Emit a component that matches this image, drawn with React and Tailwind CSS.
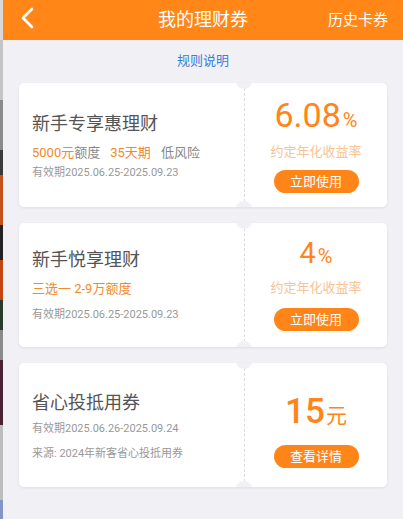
import React from 'react';

const cjk = { fontFamily: 'Roboto, "Noto Sans CJK SC", sans-serif' };

const Notches = () => (
  <>
    <span className="absolute left-[217px] top-[-10px] w-4 h-4 rounded-full bg-[#f1f1f5]" />
    <span className="absolute left-[217px] bottom-[-10px] w-4 h-4 rounded-full bg-[#f1f1f5]" />
  </>
);

const Card = ({ left, right, className = '' }) => (
  <div className={`relative flex h-[124px] bg-white rounded-[5px] shadow-[0_1px_3px_rgba(0,0,0,0.08)] overflow-hidden ${className}`}>
    <div className="w-[225px] pl-[13px] shrink-0">{left}</div>
    <div className="flex-1 border-l border-dashed border-[#dcdcdc] flex flex-col items-center">{right}</div>
    <Notches />
  </div>
);

const Button = ({ children, className = '' }) => (
  <div className={`w-[85px] h-[23px] rounded-full bg-[#ff8519] text-white text-[13px] leading-[23px] text-center ${className}`}>
    {children}
  </div>
);

const App = () => {
  return (
    <div className="flex w-[403px] min-h-[519px] bg-[#f1f1f5]" style={cjk}>
      {/* left edge of previous page */}
      <div className="w-[3px] shrink-0 flex flex-col">
        <div className="h-[40px] bg-[#d8d8d8]" />
        <div className="h-[60px] bg-[#c4c4c4]" />
        <div className="h-[50px] bg-[#8a8a8a]" />
        <div className="h-[25px] bg-[#3a3a3a]" />
        <div className="h-[50px] bg-[#c8501c]" />
        <div className="h-[35px] bg-[#222]" />
        <div className="h-[40px] bg-[#c24512]" />
        <div className="h-[30px] bg-[#2c3a2c]" />
        <div className="h-[30px] bg-[#8a8a8a]" />
        <div className="h-[65px] bg-[#4a2232]" />
        <div className="h-[75px] bg-[#bdbdbd]" />
        <div className="flex-1 bg-[#8494c4]" />
      </div>

      <div className="flex-1 flex flex-col">
        {/* header */}
        <div className="h-10 bg-[#ff8617] flex items-center relative">
          <svg className="absolute left-[16px] top-[7px]" width="18" height="22" viewBox="0 0 18 22">
            <polyline points="13,2 4,11 13,20" fill="none" stroke="#fff" strokeWidth="2.6" strokeLinecap="round" strokeLinejoin="round" />
          </svg>
          <div className="flex-1 text-center text-white text-[18px] leading-6">我的理财券</div>
          <div className="absolute right-[15px] text-white text-[15px] leading-5">历史卡券</div>
        </div>

        <div className="pt-3 text-center text-[13px] leading-[18px] text-[#3a7ed8]">规则说明</div>

        <div className="px-4 mt-[13px] flex flex-col">
          <Card
            left={
              <div className="pt-[29px]">
                <div className="text-[18px] leading-6 text-[#555]">新手专享惠理财</div>
                <div className="mt-2 text-[13px] leading-[18px] flex gap-[10px]">
                  <span className="text-[#f08a2c]">5000元<span className="text-[#888]">额度</span></span>
                  <span className="text-[#f08a2c]">35天期</span>
                  <span className="text-[#888]">低风险</span>
                </div>
                <div className="mt-[3px] text-[11px] leading-4 text-[#999]">有效期2025.06.25-2025.09.23</div>
              </div>
            }
            right={
              <>
                <div className="pt-[14px] leading-9 text-[#ff8519]">
                  <span className="text-[34px]">6.08</span>
                  <span className="text-[20px] ml-[2px]">%</span>
                </div>
                <div className="mt-[3px] text-[13px] leading-[18px] text-[#f6c394]">约定年化收益率</div>
                <Button className="mt-[9px]">立即使用</Button>
              </>
            }
          />

          <Card
            className="mt-4"
            left={
              <div className="pt-[25px]">
                <div className="text-[18px] leading-6 text-[#555]">新手悦享理财</div>
                <div className="mt-2 text-[13px] leading-[18px] text-[#f08a2c]">三选一 2-9万额度</div>
                <div className="mt-[9px] text-[11px] leading-4 text-[#999]">有效期2025.06.25-2025.09.23</div>
              </div>
            }
            right={
              <>
                <div className="pt-[14px] leading-8 text-[#ff8519]">
                  <span className="text-[29px]">4</span>
                  <span className="text-[20px] ml-[2px]">%</span>
                </div>
                <div className="mt-[5px] text-[13px] leading-[18px] text-[#f6c394]">约定年化收益率</div>
                <Button className="mt-[11px]">立即使用</Button>
              </>
            }
          />

          <Card
            className="mt-4"
            left={
              <div className="pt-[28px]">
                <div className="text-[18px] leading-6 text-[#555]">省心投抵用券</div>
                <div className="mt-[6px] text-[11px] leading-4 text-[#999]">有效期2025.06.26-2025.09.24</div>
                <div className="mt-[9px] text-[11px] leading-4 text-[#999]">来源: 2024年新客省心投抵用券</div>
              </div>
            }
            right={
              <>
                <div className="pt-[29px] leading-10 text-[#ff8519]">
                  <span className="text-[35px] font-medium">15</span>
                  <span className="text-[21px] ml-[1px]">元</span>
                </div>
                <Button className="mt-[7px]">查看详情</Button>
              </>
            }
          />
        </div>
      </div>
    </div>
  );
};

export default App;
